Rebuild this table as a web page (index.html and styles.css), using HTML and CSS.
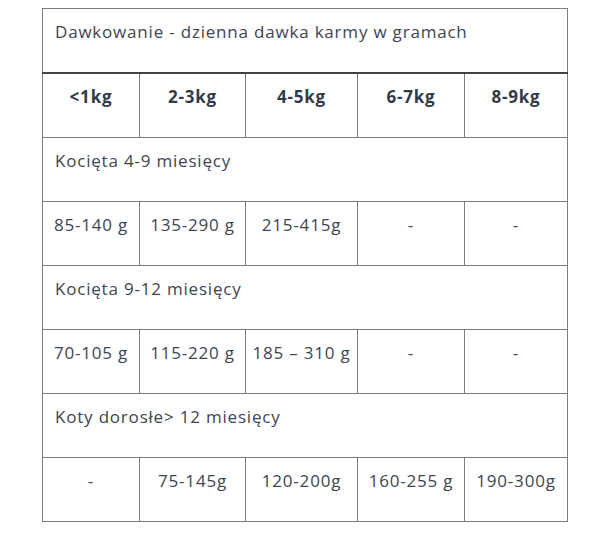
FILE: index.html
```html
<!DOCTYPE html>
<html lang="pl">
<head>
<meta charset="utf-8">
<title>Dawkowanie</title>
<link rel="stylesheet" href="styles.css">
</head>
<body>
<div class="wrap">
<table class="dose">
  <colgroup>
    <col class="c1"><col class="c2"><col class="c3"><col class="c4"><col class="c5">
  </colgroup>
  <thead>
    <tr><th colspan="5" class="title">Dawkowanie - dzienna dawka karmy w gramach</th></tr>
  </thead>
  <tbody>
    <tr class="head"><td>&lt;1kg</td><td>2-3kg</td><td>4-5kg</td><td>6-7kg</td><td>8-9kg</td></tr>
    <tr><td colspan="5" class="section">Kocięta 4-9 miesięcy</td></tr>
    <tr><td>85-140 g</td><td>135-290 g</td><td>215-415g</td><td>-</td><td>-</td></tr>
    <tr><td colspan="5" class="section">Kocięta 9-12 miesięcy</td></tr>
    <tr><td>70-105 g</td><td>115-220 g</td><td>185 – 310 g</td><td>-</td><td>-</td></tr>
    <tr><td colspan="5" class="section">Koty dorosłe&gt; 12 miesięcy</td></tr>
    <tr><td>-</td><td>75-145g</td><td>120-200g</td><td>160-255 g</td><td>190-300g</td></tr>
  </tbody>
</table>
</div>
</body>
</html>
```
FILE: styles.css
```css
html, body {
  margin: 0;
  padding: 0;
  background: #ffffff;
}
.wrap {
  padding: 8px 0 0 42px;
}
.dose {
  border-collapse: collapse;
  table-layout: fixed;
  width: 525px;
  font-family: "Open Sans", "Liberation Sans", sans-serif;
  font-size: 17px;
  letter-spacing: 0.8px;
  color: #3e4451;
}
.c1 { width: 97px; }
.c2 { width: 106px; }
.c3 { width: 112px; }
.c4 { width: 107px; }
.c5 { width: 103px; }
.dose th,
.dose td {
  border: 1px solid #7d7d7d;
  height: 63px;
  box-sizing: border-box;
  padding: 11px 4px 28px;
  line-height: 24px;
  vertical-align: top;
  text-align: center;
  font-weight: 400;
  white-space: nowrap;
}
.dose th.title,
.dose td.section {
  text-align: left;
  padding-left: 12px;
}
.dose thead th {
  border-bottom: 2px solid #444444;
}
.head td {
  font-weight: 700;
  color: #323b48;
}
```
